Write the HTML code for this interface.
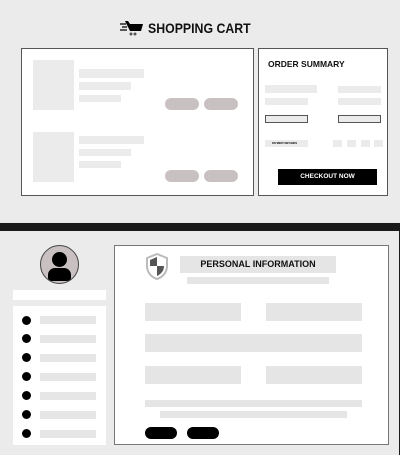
<!DOCTYPE html>
<html><head><style>
*{margin:0;padding:0;box-sizing:border-box}
body{width:400px;height:455px;background:#ebebeb;position:relative;overflow:hidden;font-family:"Liberation Sans",sans-serif}
div{position:absolute}
.g{background:#ebebeb}
.g2{background:#e5e5e5}
.p{background:#c9c1c1;border-radius:7px}
.b{background:#000;border-radius:7px}
.dot{width:9px;height:9px;border-radius:50%;background:#000;left:22px}
.lb{left:40px;width:56px;height:8px;background:#e6e6e6}
</style></head><body>
<svg style="position:absolute;left:119px;top:20px" width="26" height="16" viewBox="0 0 26 16">
<path d="M1 4h6M3 7h5M1 10h7" stroke="#000" stroke-width="1.3"/>
<path d="M6 1h3l2 3h13l-2 7H11z" fill="#000"/>
<circle cx="12" cy="14" r="1.5" fill="#555"/><circle cx="16" cy="14" r="1.5" fill="#555"/>
</svg>
<div style="left:148px;top:20px;font-size:14px;font-weight:bold;color:#111;transform:scaleX(0.88);transform-origin:0 0;white-space:nowrap">SHOPPING CART</div>

<div style="left:21px;top:48px;width:233px;height:148px;background:#fff;border:1px solid #555"></div>
<div class="g" style="left:33px;top:60px;width:41px;height:50px"></div>
<div class="g" style="left:79px;top:69px;width:65px;height:9px"></div>
<div class="g" style="left:79px;top:82px;width:52px;height:8px"></div>
<div class="g" style="left:79px;top:95px;width:42px;height:7px"></div>
<div class="p" style="left:165px;top:98px;width:34px;height:12px"></div>
<div class="p" style="left:204px;top:98px;width:34px;height:12px"></div>
<div class="g" style="left:33px;top:132px;width:41px;height:50px"></div>
<div class="g" style="left:79px;top:136px;width:65px;height:8px"></div>
<div class="g" style="left:79px;top:149px;width:52px;height:7px"></div>
<div class="g" style="left:79px;top:161px;width:42px;height:7px"></div>
<div class="p" style="left:165px;top:170px;width:34px;height:12px"></div>
<div class="p" style="left:204px;top:170px;width:34px;height:12px"></div>

<div style="left:258px;top:48px;width:130px;height:148px;background:#fff;border:1px solid #555"></div>
<div style="left:268px;top:59px;font-size:8.5px;font-weight:bold;color:#111">ORDER SUMMARY</div>
<div class="g" style="left:265px;top:85px;width:52px;height:8px"></div>
<div class="g" style="left:338px;top:86px;width:43px;height:7px"></div>
<div class="g" style="left:265px;top:98px;width:43px;height:7px"></div>
<div class="g" style="left:338px;top:98px;width:43px;height:7px"></div>
<div class="g" style="left:265px;top:115px;width:43px;height:8px;border:1px solid #555"></div>
<div class="g" style="left:338px;top:115px;width:43px;height:8px;border:1px solid #555"></div>
<div class="g" style="left:265px;top:140px;width:43px;height:7px;font-size:2.5px;font-weight:bold;line-height:7px;padding-left:7px">PAYMENT METHODS</div>
<div class="g" style="left:333px;top:140px;width:9px;height:7px"></div>
<div class="g" style="left:347px;top:140px;width:9px;height:7px"></div>
<div class="g" style="left:361px;top:140px;width:9px;height:7px"></div>
<div class="g" style="left:374px;top:140px;width:9px;height:7px"></div>
<div style="left:278px;top:169px;width:99px;height:16px;background:#000;color:#fff;font-size:6.5px;font-weight:bold;text-align:center;line-height:16px">CHECKOUT NOW</div>

<div style="left:0;top:223px;width:400px;height:8px;background:#1a1a1a"></div>
<div style="left:399px;top:223px;width:1px;height:232px;background:#1a1a1a"></div>

<div style="left:40px;top:245px;width:39px;height:39px;border-radius:50%;background:#c9c1c1;border:1px solid #444;overflow:hidden">
<div style="left:11px;top:6px;width:15px;height:15px;border-radius:50%;background:#000"></div>
<div style="left:7px;top:22px;width:23px;height:13px;border-radius:7px 7px 3px 3px;background:#000"></div>
</div>
<div style="left:13px;top:290px;width:93px;height:10px;background:#fff"></div>
<div style="left:13px;top:306px;width:93px;height:139px;background:#fff"></div>
<div class="dot" style="top:316px"></div><div class="lb" style="top:316px"></div>
<div class="dot" style="top:334px"></div><div class="lb" style="top:335px"></div>
<div class="dot" style="top:353px"></div><div class="lb" style="top:354px"></div>
<div class="dot" style="top:372px"></div><div class="lb" style="top:373px"></div>
<div class="dot" style="top:391px"></div><div class="lb" style="top:392px"></div>
<div class="dot" style="top:410px"></div><div class="lb" style="top:411px"></div>
<div class="dot" style="top:429px"></div><div class="lb" style="top:430px"></div>

<div style="left:114px;top:245px;width:275px;height:200px;background:#fff;border:1px solid #777"></div>
<svg style="position:absolute;left:145px;top:253px" width="26" height="27" viewBox="0 0 26 27">
<path d="M12 1L2 5v8c0 6 4 11 10 13c6-2 10-7 10-13V5z" fill="#fff" stroke="#bbb" stroke-width="2"/>
<path d="M12 4L5 7v6h7z" fill="#555"/><path d="M12 13h7c0 5-3 8-7 10z" fill="#555"/>
</svg>
<div class="g2" style="left:180px;top:256px;width:156px;height:17px;font-size:9px;font-weight:bold;text-align:center;line-height:17px;color:#111">PERSONAL INFORMATION</div>
<div class="g2" style="left:187px;top:277px;width:142px;height:7px"></div>
<div class="g2" style="left:145px;top:303px;width:96px;height:18px"></div>
<div class="g2" style="left:266px;top:303px;width:96px;height:18px"></div>
<div class="g2" style="left:145px;top:334px;width:217px;height:18px"></div>
<div class="g2" style="left:145px;top:366px;width:96px;height:18px"></div>
<div class="g2" style="left:266px;top:366px;width:96px;height:18px"></div>
<div class="g2" style="left:145px;top:400px;width:217px;height:7px"></div>
<div class="g2" style="left:160px;top:411px;width:187px;height:7px"></div>
<div class="b" style="left:145px;top:427px;width:32px;height:12px;border-radius:6px"></div>
<div class="b" style="left:187px;top:427px;width:32px;height:12px;border-radius:6px"></div>
</body></html>
